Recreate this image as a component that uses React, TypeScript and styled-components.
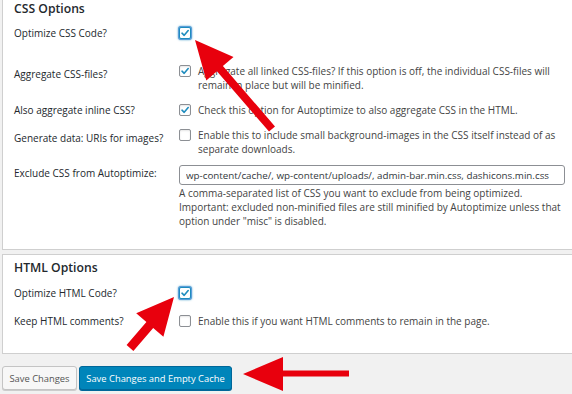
import styled, { createGlobalStyle } from "styled-components";

const GlobalStyle = createGlobalStyle`
   html, body {
      margin: 0;
      padding: 0;
      background: #f1f1f1;
   }
   body {
      font-family: "Open Sans", "Noto Sans", sans-serif;
      font-size: 10px;
      color: #23282d;
   }
`;

const cssRows = [
   { label: "Optimize CSS Code?", checked: true, focused: true, top: 4 },
   {
      label: "Aggregate CSS-files?",
      checked: true,
      top: 24,
      labelOffset: 3,
      desc: [
         "Aggregate all linked CSS-files? If this option is off, the individual CSS-files will",
         "remain in place but will be minified.",
      ],
   },
   {
      label: "Also aggregate inline CSS?",
      checked: true,
      top: 11,
      desc: ["Check this option for Autoptimize to also aggregate CSS in the HTML."],
   },
   {
      label: "Generate data: URIs for images?",
      checked: false,
      top: 11,
      labelOffset: 3,
      desc: [
         "Enable this to include small background-images in the CSS itself instead of as",
         "separate downloads.",
      ],
   },
];

const htmlRows = [
   { label: "Optimize HTML Code?", checked: true, focused: true, top: 5 },
   {
      label: "Keep HTML comments?",
      checked: false,
      top: 14,
      desc: ["Enable this if you want HTML comments to remain in the page."],
   },
];

type RowData = {
   label: string;
   checked: boolean;
   focused?: boolean;
   top: number;
   labelOffset?: number;
   desc?: string[];
};

function CheckRow({ row }: { row: RowData }) {
   return (
      <Row $top={row.top}>
         <Label $offset={row.labelOffset || 0}>{row.label}</Label>
         <Field>
            <Checkbox $checked={row.checked} $focused={!!row.focused}>
               {row.checked && (
                  <svg width="10" height="10" viewBox="0 0 10 10">
                     <polyline
                        points="2,5.2 4.2,7.3 8.2,2.6"
                        fill="none"
                        stroke="#1e8cbe"
                        strokeWidth="1.6"
                        strokeLinecap="round"
                        strokeLinejoin="round"
                     />
                  </svg>
               )}
            </Checkbox>
            {row.desc && (
               <Desc>
                  {row.desc.map((line) => (
                     <div key={line}>{line}</div>
                  ))}
               </Desc>
            )}
         </Field>
      </Row>
   );
}

function Arrows() {
   return (
      <ArrowLayer width="572" height="394" viewBox="0 0 572 394">
         {/* top arrow */}
         <polygon points="195,40 233.5,56.9 222.9,66.1 275,126.4 269,131.6 216.9,71.3 206.3,80.5" />
         {/* middle arrow */}
         <polygon points="174,297 163.4,336.8 153.2,328 133.4,350.9 126.6,345.1 146.4,322 136.2,313.2" />
         {/* bottom arrow */}
         <polygon points="243,374 283,357 283,370.5 349,370.5 349,376.5 283,376.5 283,391" />
      </ArrowLayer>
   );
}

export default function App() {
   return (
      <Page>
         <GlobalStyle />
         <Panel $cut>
            <Title>CSS Options</Title>
            {cssRows.map((row) => (
               <CheckRow key={row.label} row={row} />
            ))}
            <Row $top={9}>
               <Label $offset={1}>Exclude CSS from Autoptimize:</Label>
               <Field $column>
                  <TextInput defaultValue="wp-content/cache/, wp-content/uploads/, admin-bar.min.css, dashicons.min.css" />
                  <Desc>
                     <div>A comma-separated list of CSS you want to exclude from being optimized.</div>
                     <div>
                        Important: excluded non-minified files are still minified by Autoptimize unless that
                     </div>
                     <div>option under "misc" is disabled.</div>
                  </Desc>
               </Field>
            </Row>
         </Panel>
         <Panel>
            <Title>HTML Options</Title>
            {htmlRows.map((row) => (
               <CheckRow key={row.label} row={row} />
            ))}
         </Panel>
         <Buttons>
            <Button $width={75}>Save Changes</Button>
            <Button $width={153} $primary>
               Save Changes and Empty Cache
            </Button>
         </Buttons>
         <Arrows />
      </Page>
   );
}

const Page = styled.div`
   position: relative;
   width: 572px;
   height: 394px;
   overflow: hidden;
   padding-left: 2px;
   box-sizing: border-box;
   background: #f1f1f1;
`;

const Panel = styled.div<{ $cut?: boolean }>`
   background: #fff;
   border: 1px solid #cfcfcf;
   border-right: none;
   border-top: ${({ $cut }) => ($cut ? "none" : "1px solid #cfcfcf")};
   padding: ${({ $cut }) => ($cut ? "0" : "4px")} 0 0 11px;
   height: ${({ $cut }) => ($cut ? "250px" : "100px")};
   box-sizing: border-box;
   margin-bottom: ${({ $cut }) => ($cut ? "4px" : "12px")};
`;

const Title = styled.h2`
   margin: 0;
   padding-top: 1px;
   height: 22px;
   box-sizing: border-box;
   font-size: 12.2px;
   font-weight: 600;
   line-height: 16px;
   color: #23282d;
`;

const Row = styled.div<{ $top: number }>`
   display: grid;
   grid-template-columns: 165px 1fr;
   align-items: start;
   margin-top: ${({ $top }) => $top}px;
   line-height: 14px;
`;

const Label = styled.div<{ $offset: number }>`
   padding-top: ${({ $offset }) => $offset}px;
   color: #23282d;
   white-space: nowrap;
`;

const Field = styled.div<{ $column?: boolean }>`
   display: flex;
   flex-direction: ${({ $column }) => ($column ? "column" : "row")};
   align-items: flex-start;
   gap: ${({ $column }) => ($column ? "1px" : "7px")};
`;

const Checkbox = styled.span<{ $checked: boolean; $focused: boolean }>`
   flex: none;
   display: flex;
   align-items: center;
   justify-content: center;
   width: 12px;
   height: 12px;
   margin-top: 1px;
   box-sizing: border-box;
   border: 1px solid ${({ $focused }) => ($focused ? "#1e8cbe" : "#8c8f94")};
   border-radius: 2px;
   background: #fff;
   box-shadow: ${({ $focused }) =>
      $focused
         ? "0 0 0 1px #5b9dd9, 0 0 2px 1px rgba(30, 140, 190, 0.8)"
         : "inset 0 1px 2px rgba(0,0,0,0.1)"};
`;

const Desc = styled.div`
   color: #444;
   white-space: nowrap;
`;

const TextInput = styled.input`
   width: 386px;
   height: 20px;
   box-sizing: border-box;
   margin: 0;
   padding: 0 6px;
   border: 1px solid #8c8f94;
   border-radius: 3px;
   font-family: inherit;
   font-size: 9.8px;
   color: #32373c;
   background: #fff;
   outline: none;
`;

const Buttons = styled.div`
   display: flex;
   gap: 2px;
`;

const Button = styled.button<{ $primary?: boolean; $width: number }>`
   width: ${({ $width }) => $width}px;
   height: 24px;
   padding: 0;
   font-family: inherit;
   font-size: 9.4px;
   white-space: nowrap;
   border-radius: 3px;
   border: 1px solid ${({ $primary }) => ($primary ? "#006799" : "#c4c4c4")};
   background: ${({ $primary }) => ($primary ? "#0085ba" : "#f7f7f7")};
   color: ${({ $primary }) => ($primary ? "#fff" : "#555")};
   box-shadow: ${({ $primary }) => ($primary ? "0 1px 0 #006799" : "0 1px 0 #ccc")};
`;

const ArrowLayer = styled.svg`
   position: absolute;
   left: 0;
   top: 0;
   fill: #e8000d;
   pointer-events: none;
`;
